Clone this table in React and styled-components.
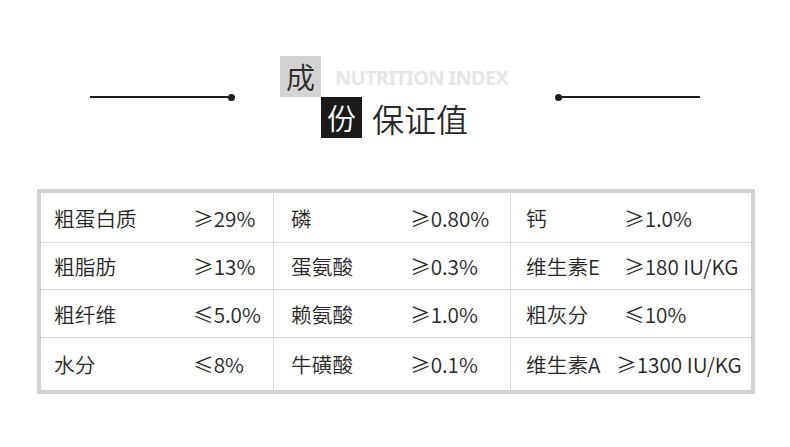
import styled, { createGlobalStyle } from 'styled-components';

const GlobalStyle = createGlobalStyle`
  body {
    margin: 0;
    background: #ffffff;
    font-family: "Noto Sans CJK SC", "Noto Sans", sans-serif;
    color: #222;
  }
`;

const Page = styled.div`
  width: 790px;
  height: 447px;
  padding-top: 56px;
  box-sizing: border-box;
`;

const Header = styled.div`
  display: flex;
  align-items: center;
  justify-content: center;
  gap: 45px;
`;

const Deco = styled.div`
  display: flex;
  align-items: center;
  flex-direction: ${({ flip }) => (flip ? 'row-reverse' : 'row')};
  width: 145px;
`;

const Line = styled.div`
  flex: 1;
  height: 1.5px;
  background: #1a1a1a;
`;

const Dot = styled.div`
  width: 7px;
  height: 7px;
  border-radius: 50%;
  background: #1a1a1a;
`;

const TitleBlock = styled.div`
  display: flex;
  flex-direction: column;
  width: 230px;
`;

const TitleRow = styled.div`
  display: flex;
  align-items: center;
  gap: ${({ gap }) => gap}px;
  padding-left: ${({ indent }) => indent || 0}px;
`;

const CharBox = styled.div`
  width: 41px;
  height: 41px;
  display: flex;
  align-items: center;
  justify-content: center;
  font-size: 29px;
  font-weight: 350;
  line-height: 1;
  background: ${({ dark }) => (dark ? '#1a1a1a' : '#d3d3d3')};
  color: ${({ dark }) => (dark ? '#ffffff' : '#2a2a2a')};
`;

const EnTitle = styled.span`
  font-family: "Noto Sans", sans-serif;
  font-weight: 700;
  font-size: 20px;
  letter-spacing: -0.7px;
  color: #e6e6e6;
  padding-top: 2px;
`;

const CnTitle = styled.span`
  font-size: 32px;
  font-weight: 350;
  line-height: 1;
  color: #2a2a2a;
`;

const Table = styled.div`
  margin: 51px 0 0 37px;
  width: 718px;
  box-sizing: border-box;
  border: 4px solid #d2d2d2;
  display: grid;
  grid-template-columns: 233px 237px 1fr;
  grid-template-rows: 50px 47px 48px 1fr;
  height: 205px;
`;

const Cell = styled.div`
  display: flex;
  align-items: center;
  padding-left: ${({ pad }) => pad}px;
  border-right: ${({ last }) => (last ? 'none' : '1px solid #d8d8d8')};
  border-bottom: ${({ bottom }) => (bottom ? 'none' : '1px solid #d8d8d8')};
  font-size: 20.7px;
  font-weight: 350;
  color: #262626;
  white-space: nowrap;
`;

const Label = styled.span`
  width: ${({ w }) => w}px;
  flex-shrink: 0;
`;

const Value = styled.span``;

const columns = [
  { pad: 13, w: 139 },
  { pad: 17, w: 119 },
  { pad: 15, w: 98 },
];

const rows = [
  [['粗蛋白质', '≥29%'], ['磷', '≥0.80%'], ['钙', '≥1.0%']],
  [['粗脂肪', '≥13%'], ['蛋氨酸', '≥0.3%'], ['维生素E', '≥180 IU/KG']],
  [['粗纤维', '≤5.0%'], ['赖氨酸', '≥1.0%'], ['粗灰分', '≤10%']],
  [['水分', '≤8%'], ['牛磺酸', '≥0.1%'], ['维生素A', '≥1300 IU/KG', 90]],
];

export default function App() {
  return (
    <>
      <GlobalStyle />
      <Page>
        <Header>
          <Deco>
            <Line />
            <Dot />
          </Deco>
          <TitleBlock>
            <TitleRow gap={14}>
              <CharBox>成</CharBox>
              <EnTitle>NUTRITION INDEX</EnTitle>
            </TitleRow>
            <TitleRow gap={10} indent={41}>
              <CharBox dark>份</CharBox>
              <CnTitle>保证值</CnTitle>
            </TitleRow>
          </TitleBlock>
          <Deco flip>
            <Line />
            <Dot />
          </Deco>
        </Header>
        <Table>
          {rows.map((row, ri) =>
            row.map(([label, value, w], ci) => (
              <Cell
                key={`${ri}-${ci}`}
                pad={columns[ci].pad}
                last={ci === 2}
                bottom={ri === rows.length - 1}
              >
                <Label w={w || columns[ci].w}>{label}</Label>
                <Value>{value}</Value>
              </Cell>
            ))
          )}
        </Table>
      </Page>
    </>
  );
}
